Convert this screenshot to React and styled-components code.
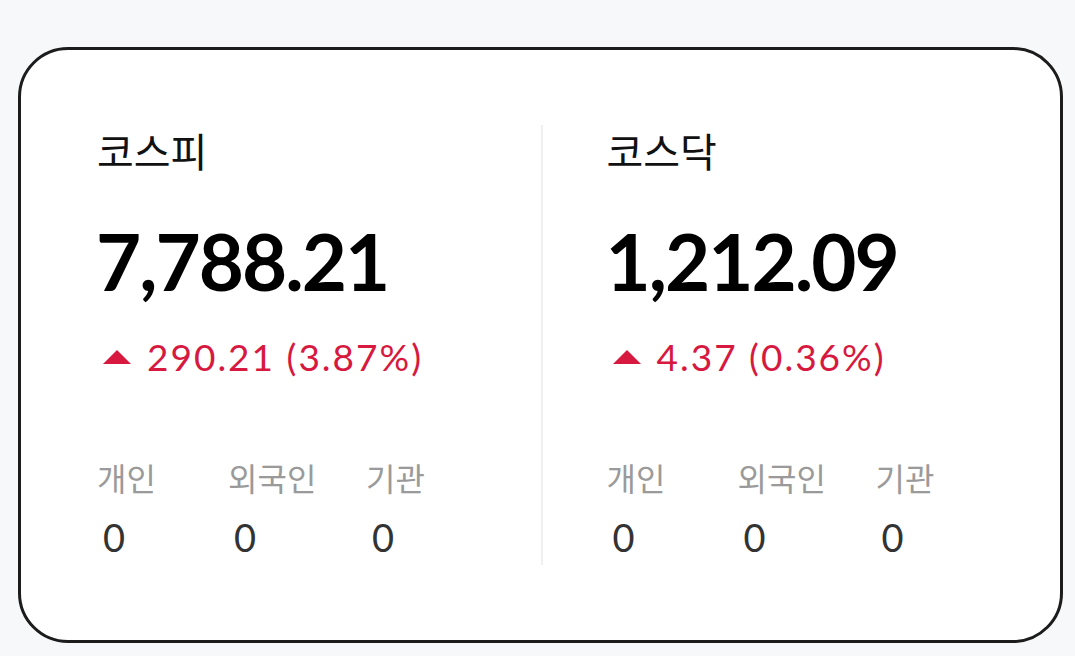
import styled, { createGlobalStyle } from "styled-components";

const GlobalStyle = createGlobalStyle`
  * {
    box-sizing: border-box;
  }
  body {
    margin: 0;
    background: #f7f8fa;
    font-family: "Lato", "Noto Sans CJK KR", sans-serif;
  }
`;

const Page = styled.div`
  padding: 47px 12px 13px 18px;
`;

const Card = styled.div`
  display: grid;
  grid-template-columns: 1fr 1fr;
  height: 596px;
  padding: 75px 0;
  background: #fff;
  border: 3px solid #1c1c1c;
  border-radius: 50px;
`;

const Column = styled.div`
  display: flex;
  flex-direction: column;
  padding-left: ${(p) => (p.$divided ? "64px" : "76px")};
  border-left: ${(p) => (p.$divided ? "2px solid #efefef" : "none")};
`;

const Title = styled.div`
  font-family: "Noto Sans CJK KR", sans-serif;
  font-size: 40px;
  line-height: 50px;
  color: #111;
`;

const Price = styled.div`
  margin-top: 46px;
  margin-left: -1px;
  font-size: 78px;
  font-weight: 700;
  line-height: 80px;
  letter-spacing: -2px;
  color: #000;
`;

const Change = styled.div`
  display: flex;
  align-items: center;
  gap: 16px;
  margin-top: 34px;
  padding-left: 6px;
  font-size: 37px;
  line-height: 44px;
  letter-spacing: 2px;
  color: #d7193f;
`;

const Triangle = styled.span`
  width: 0;
  height: 0;
  border-left: 14px solid transparent;
  border-right: 14px solid transparent;
  border-bottom: 14px solid #d7193f;
`;

const Flows = styled.div`
  display: grid;
  grid-template-columns: 131px 138px auto;
  margin-top: 78px;
`;

const Flow = styled.div`
  display: flex;
  flex-direction: column;
  gap: 20px;
`;

const FlowLabel = styled.div`
  font-family: "Noto Sans CJK KR", sans-serif;
  font-size: 32px;
  line-height: 40px;
  color: #9a9a9a;
`;

const FlowValue = styled.div`
  padding-left: 6px;
  font-size: 38px;
  line-height: 40px;
  color: #333;
`;

const markets = [
  { name: "코스피", price: "7,788.21", change: "290.21 (3.87%)" },
  { name: "코스닥", price: "1,212.09", change: "4.37 (0.36%)" },
];

const investors = ["개인", "외국인", "기관"];

export default function App() {
  return (
    <>
      <GlobalStyle />
      <Page>
        <Card>
          {markets.map((m, i) => (
            <Column key={m.name} $divided={i > 0}>
              <Title>{m.name}</Title>
              <Price>{m.price}</Price>
              <Change>
                <Triangle />
                {m.change}
              </Change>
              <Flows>
                {investors.map((name) => (
                  <Flow key={name}>
                    <FlowLabel>{name}</FlowLabel>
                    <FlowValue>0</FlowValue>
                  </Flow>
                ))}
              </Flows>
            </Column>
          ))}
        </Card>
      </Page>
    </>
  );
}
